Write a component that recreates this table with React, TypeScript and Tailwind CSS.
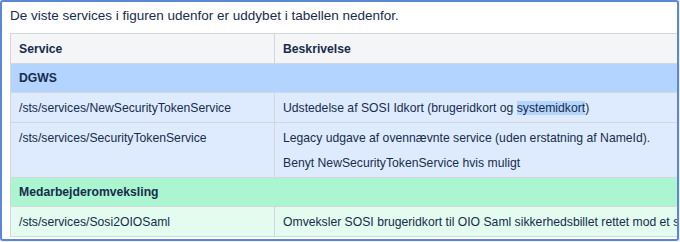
const rows = [
  { kind: "group", label: "DGWS", tone: "blue" },
  {
    kind: "row",
    tone: "blue",
    service: "/sts/services/NewSecurityTokenService",
    lines: [
      <>
        Udstedelse af SOSI Idkort (brugeridkort og{" "}
        <span className="bg-[#b4d5fe]">systemidkort</span>)
      </>,
    ],
  },
  {
    kind: "row",
    tone: "blue",
    service: "/sts/services/SecurityTokenService",
    lines: [
      "Legacy udgave af ovennævnte service (uden erstatning af NameId).",
      "Benyt NewSecurityTokenService hvis muligt",
    ],
  },
  { kind: "group", label: "Medarbejderomveksling", tone: "green" },
  {
    kind: "row",
    tone: "green",
    service: "/sts/services/Sosi2OIOSaml",
    lines: ["Omveksler SOSI brugeridkort til OIO Saml sikkerhedsbillet rettet mod et specifikt modtagersystem"],
  },
] as const;

const groupBg = { blue: "bg-[#b3d4ff]", green: "bg-[#abf5d1]" };
const cellBg = { blue: "bg-[#deebff]", green: "bg-[#e3fcef]" };

export default function App() {
  return (
    <div className="w-[680px] h-[242px] bg-[#eef2f8]">
      <div
        className="w-[679px] h-[241px] overflow-hidden rounded-[3px] border-2 border-[#5b88d6] bg-white text-[#172b4d]"
        style={{ fontFamily: '"Liberation Sans", Arial, sans-serif' }}
      >
        <p className="pl-2 pt-[4px] pb-[7px] text-[13.5px] leading-5">
          De viste services i figuren udenfor er uddybet i tabellen nedenfor.
        </p>
        <table className="ml-2 w-[900px] border-collapse text-[12.2px] leading-5">
          <thead>
            <tr className="h-[30px] bg-[#f4f5f7]">
              <th className="w-[264px] border border-[#d3d7dd] px-[8px] text-left font-bold">Service</th>
              <th className="border border-[#d3d7dd] px-[8px] text-left font-bold">Beskrivelse</th>
            </tr>
          </thead>
          <tbody>
            {rows.map((r, i) =>
              r.kind === "group" ? (
                <tr key={i} className={`h-[29px] ${groupBg[r.tone]}`}>
                  <td colSpan={2} className="border border-[#d3d7dd] px-[8px] py-0 font-bold">
                    {r.label}
                  </td>
                </tr>
              ) : (
                <tr key={i} className={cellBg[r.tone]}>
                  <td className="border border-[#d3d7dd] px-[8px] pt-[5px] pb-[4px] align-top">{r.service}</td>
                  <td className="border border-[#d3d7dd] px-[8px] pt-[5px] pb-[4px] align-top whitespace-nowrap">
                    {r.lines.map((l, j) => (
                      <p key={j} className={j > 0 ? "mt-[5px]" : ""}>
                        {l}
                      </p>
                    ))}
                  </td>
                </tr>
              )
            )}
          </tbody>
        </table>
      </div>
    </div>
  );
}
